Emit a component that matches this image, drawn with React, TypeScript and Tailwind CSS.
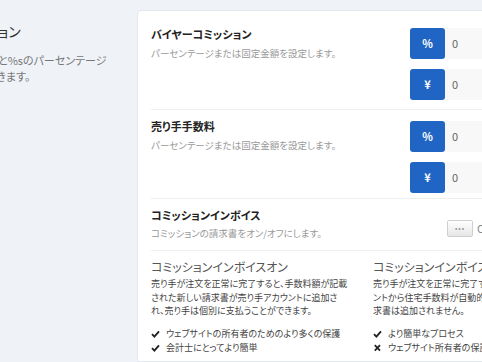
import React from "react";

const font = { fontFamily: '"Noto Sans CJK JP", "Noto Sans", sans-serif' };

const Check = () => (
  <svg width="9" height="8" viewBox="0 0 9 8" className="shrink-0">
    <path d="M1 4.2 L3.4 6.6 L8 1.4" fill="none" stroke="#222" strokeWidth="1.9" />
  </svg>
);

const Cross = () => (
  <svg width="9" height="8" viewBox="0 0 9 8" className="shrink-0">
    <path d="M1.8 1.2 L7 6.6 M7 1.2 L1.8 6.6" fill="none" stroke="#222" strokeWidth="1.8" />
  </svg>
);

const InputGroup = ({ sign }: { sign: string }) => (
  <div className="flex h-[31px]">
    <button className="w-[35px] h-full rounded-[3px] bg-[#2065c3] text-white text-[11px] font-bold flex items-center justify-center">
      {sign}
    </button>
    <div className="w-[110px] h-full bg-[#f8f8f8] text-[11px] text-[#666] flex items-center pl-[7px]">
      0
    </div>
  </div>
);

const Item = ({ ok, children }: { ok: boolean; children: React.ReactNode }) => (
  <li className="flex items-center gap-[6px] h-[14px]">
    {ok ? <Check /> : <Cross />}
    <span>{children}</span>
  </li>
);

const App = () => {
  return (
    <div
      className="w-[482px] h-[362px] overflow-hidden bg-[#eff2f7] flex [font-feature-settings:'palt']"
      style={font}
    >
      <div className="shrink-0 w-[181px] -ml-[44px] pt-[22px]">
        <h2 className="-ml-[7px] text-[14px] text-[#333] leading-[18px] whitespace-nowrap">コミッション</h2>
        <p className="mt-[12px] -ml-[2px] text-[11px] leading-[16px] text-[#777] whitespace-nowrap">
          固定金額と%sのパーセンテージ
          <br />
          を設定できます。
        </p>
      </div>

      <div className="shrink-0 w-[420px] mt-[10px] bg-white border border-[#e4e8ee] rounded-tl-[4px] pl-[13px] pt-[17px]">
        {/* buyer */}
        <div className="flex border-b border-[#eeeeee] pb-[9px] w-[410px]">
          <div className="w-[259px]">
            <p className="text-[11px] font-bold text-[#222] leading-[14px] mt-[-1px]">バイヤーコミッション</p>
            <p className="text-[9.5px] text-[#999] leading-[14px] mt-[5px]">パーセンテージまたは固定金額を設定します。</p>
          </div>
          <div className="flex flex-col gap-[10px]">
            <InputGroup sign="%" />
            <InputGroup sign="¥" />
          </div>
        </div>

        {/* seller */}
        <div className="flex border-b border-[#eeeeee] pt-[11px] pb-[5px] w-[410px]">
          <div className="w-[259px]">
            <p className="text-[11px] font-bold text-[#222] leading-[14px] mt-[-2px]">売り手手数料</p>
            <p className="text-[9.5px] text-[#999] leading-[14px] mt-[5px]">パーセンテージまたは固定金額を設定します。</p>
          </div>
          <div className="flex flex-col gap-[10px]">
            <InputGroup sign="%" />
            <InputGroup sign="¥" />
          </div>
        </div>

        {/* invoice toggle */}
        <div className="flex items-center border-b border-[#eeeeee] pt-[9px] pb-[10px] w-[410px]">
          <div className="w-[296px]">
            <p className="text-[11px] font-bold text-[#222] leading-[14px]">コミッションインボイス</p>
            <p className="text-[9.5px] text-[#999] leading-[14px] mt-[4px]">コミッションの請求書をオン/オフにします。</p>
          </div>
          <div className="flex items-center h-[17px] mt-[8px]">
            <div className="w-[26px] h-[17px] border border-[#cfcfcf] rounded-[2px] bg-gradient-to-b from-white to-[#e6e6e6] text-[7px] tracking-[1px] text-[#999] flex items-center justify-center leading-none">
              •••
            </div>
            <span className="ml-[4px] text-[11px] text-[#888]">OFF</span>
          </div>
        </div>

        {/* comparison */}
        <div className="flex gap-[22px] pt-[8px] text-[#444]">
          <div className="w-[200px] shrink-0">
            <h3 className="text-[12px] text-[#555] leading-[16px]">コミッションインボイスオン</h3>
            <p className="text-[9px] leading-[13.5px] mt-[2px]">
              売り手が注文を正常に完了すると、手数料額が記載された新しい請求書が売り手アカウントに追加され、売り手は個別に支払うことができます。
            </p>
            <ul className="text-[9px] mt-[9px] flex flex-col">
              <Item ok>ウェブサイトの所有者のためのより多くの保護</Item>
              <Item ok>会計士にとってより簡単</Item>
            </ul>
          </div>
          <div className="w-[200px] shrink-0">
            <h3 className="text-[12px] text-[#555] leading-[16px]">コミッションインボイスオフ</h3>
            <p className="text-[9px] leading-[13.5px] mt-[2px]">
              売り手が注文を正常に完了すると、売り手のアカウ
              <br />
              ントから住宅手数料が自動的に引き落とされ、請
              <br />
              求書は追加されません。
            </p>
            <ul className="text-[9px] mt-[9px] flex flex-col">
              <Item ok>より簡単なプロセス</Item>
              <Item ok={false}>ウェブサイト所有者の保護が少ない</Item>
            </ul>
          </div>
        </div>
      </div>
    </div>
  );
};

export default App;
